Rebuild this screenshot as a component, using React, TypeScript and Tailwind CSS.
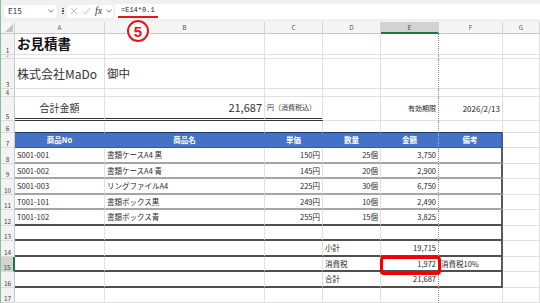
import React from "react";

type Spec = {
  t?: React.ReactNode;
  a?: "l" | "c" | "r";
  z?: string;
  c?: string;
  b?: string;
  r?: string;
};

const W = ["w-[90px]", "w-[160px]", "w-[58px]", "w-[58px]", "w-[58px]", "w-[64px]", "flex-1"];

const GRID_B = "border-b border-b-[#e1e1e1]";
const LIGHT_B = "border-b-2 border-b-[#a5a5a5]";
const DARK_B = "border-b-2 border-b-[#4f4f4f]";
const DOUBLE_B = "border-b-[3px] border-b-[#333] [border-bottom-style:double]";
const EDGE_R = "border-r-2 border-r-[#5a5a5a]";

function Row({
  h,
  n,
  cells = [],
  bottom,
  edge = false,
  sel = false,
  lz = "text-[6.5px] pb-[1px]",
}: {
  h: string;
  n: number;
  cells?: Spec[];
  bottom?: string;
  edge?: boolean;
  sel?: boolean;
  lz?: string;
}) {
  return (
    <div className={`flex ${h}`}>
      <div
        className={`w-[14px] shrink-0 overflow-hidden flex items-end justify-center ${lz} leading-none border-b border-b-[#dadada] ${
          sel
            ? "bg-[#d2d2d2] text-[#17663a] border-r-2 border-r-[#217346]"
            : "bg-[#f3f3f3] text-[#444] border-r border-r-[#c9c9c9]"
        }`}
      >
        {n}
      </div>
      {W.map((w, i) => {
        const s = cells[i] ?? {};
        const al = s.a === "r" ? "justify-end" : s.a === "c" ? "justify-center" : "justify-start";
        const b = s.b ?? (bottom && i < 6 ? bottom : GRID_B);
        const r =
          s.r ??
          (edge && i === 5
            ? EDGE_R
            : i === 4
            ? "border-r border-r-[#8e8e8e] [border-right-style:dotted]"
            : "border-r border-r-[#e1e1e1]");
        return (
          <div
            key={i}
            className={`relative ${w} shrink-0 flex items-center ${al} px-[2px] whitespace-nowrap leading-none ${
              s.z ?? "text-[7.5px]"
            } ${s.c ?? "text-[#262626]"} ${b} ${r}`}
          >
            {s.t}
          </div>
        );
      })}
    </div>
  );
}

const Chevron = () => (
  <svg width="6" height="4" viewBox="0 0 6 4" fill="none" stroke="#666" strokeWidth="0.9">
    <path d="M0.5 0.8 L3 3.2 L5.5 0.8" />
  </svg>
);

const HEAD = "bg-[#4472c4] text-white font-bold";
const head = (t: string, i: number): Spec => ({
  t,
  a: "c",
  c: HEAD,
  b: "border-b border-b-[#3a5a96]",
  r:
    i === 4
      ? "border-r border-r-[#a9bde3] [border-right-style:dotted]"
      : i === 5
      ? "border-r-2 border-r-[#3d5f9e]"
      : "border-r border-r-[#4472c4]",
});

const items = [
  ["S001-001", "書類ケースA4 黒", "150円", "25個", "3,750"],
  ["S001-002", "書類ケースA4 青", "145円", "20個", "2,900"],
  ["S001-003", "リングファイルA4", "225円", "30個", "6,750"],
  ["T001-101", "書類ボックス黒", "249円", "10個", "2,490"],
  ["T001-102", "書類ボックス青", "255円", "15個", "3,825"],
];
const itemH = ["h-[16px]", "h-[15px]", "h-[16px]", "h-[15px]", "h-[16px]"];

const App = (): JSX.Element => {
  return (
    <div className="relative w-[540px] h-[303px] overflow-hidden bg-white border-l border-l-[#83bf98] font-['Noto_Sans_CJK_JP','Noto_Sans',sans-serif]">
      {/* formula bar */}
      <div className="flex h-[22px] items-center bg-[#f0f0f0]">
        <div className="ml-[3px] w-[53px] h-[13px] bg-white rounded-[3px] flex items-center justify-between pl-[4px] pr-[3px] text-[8px] text-[#333]">
          <span>E15</span>
          <Chevron />
        </div>
        <div className="ml-[3px] w-[6px] flex flex-col items-center gap-[1px]">
          <div className="w-[1.5px] h-[1.5px] bg-[#555]" />
          <div className="w-[1.5px] h-[1.5px] bg-[#555]" />
          <div className="w-[1.5px] h-[1.5px] bg-[#555]" />
        </div>
        <div className="ml-[1px] w-[46px] h-[13px] bg-white rounded-[3px] flex items-center gap-[4px] pl-[3px]">
          <svg width="8" height="8" viewBox="0 0 8 8" stroke="#b8b8b8" strokeWidth="0.9">
            <path d="M1 1 L7 7 M7 1 L1 7" />
          </svg>
          <svg width="9" height="8" viewBox="0 0 9 8" fill="none" stroke="#b8b8b8" strokeWidth="0.9">
            <path d="M1 4.5 L3.5 7 L8 1" />
          </svg>
          <span className="font-['Liberation_Serif',serif] italic text-[10px] leading-none text-[#333]">fx</span>
          <Chevron />
        </div>
        <div className="ml-[2px] flex-1 h-[15px] bg-white flex items-center pl-[3px]">
          <span className="px-[3px] pt-[1px] pb-[1px] border-b-2 border-b-[#e8141b] font-['Liberation_Mono',monospace] text-[7px] leading-[9px] text-[#222]">
            =E14*0.1
          </span>
        </div>
      </div>

      {/* column headers */}
      <div className="flex h-[12px] bg-[#f5f5f5]">
        <div className="relative w-[14px] shrink-0 border-r border-r-[#d0d0d0] border-b border-b-[#c6c6c6]">
          <svg className="absolute right-[1px] bottom-[1px]" width="8" height="8" viewBox="0 0 8 8">
            <polygon points="8,0 8,8 0,8" fill="#c4c4c4" />
          </svg>
        </div>
        {["A", "B", "C", "D", "E", "F", "G"].map((l, i) => (
          <div
            key={l}
            className={`${W[i]} shrink-0 flex items-center justify-center text-[6.5px] leading-none border-r border-r-[#d6d6d6] ${
              i === 4
                ? "bg-[#d2d2d2] text-[#1e6b40] border-b-2 border-b-[#217346]"
                : "text-[#555] border-b border-b-[#c6c6c6]"
            }`}
          >
            {l}
          </div>
        ))}
      </div>

      <Row h="h-[21px]" n={1} cells={[{ t: "お見積書", z: "text-[13.5px]", c: "font-bold text-[#111]" }]} />
      <Row h="h-[4px]" n={2} lz="text-[3px] pb-0" />
      <Row
        h="h-[30px]"
        n={3}
        cells={[
          { t: "株式会社MaDo", z: "text-[12px]", c: "text-[#333]" },
          { t: "御中", z: "text-[11.5px]", c: "text-[#333]" },
        ]}
      />
      <Row h="h-[8px]" n={4} lz="text-[6px] pb-0" />
      <Row
        h="h-[24px]"
        n={5}
        cells={[
          { t: "合計金額", a: "c", z: "text-[10px]", c: "text-[#333]", b: DOUBLE_B },
          { t: "21,687", a: "r", z: "text-[11px]", c: "text-[#333]", b: DOUBLE_B },
          { t: "円（消費税込）", z: "text-[7px]", c: "text-[#333]", b: DOUBLE_B },
          {},
          { t: "有効期限", a: "r", z: "text-[7px]" },
          { t: "2026/2/13", a: "r", z: "text-[8px]" },
        ]}
      />
      <Row h="h-[12px]" n={6} bottom="border-b border-b-[#1f3864]" />
      <Row
        h="h-[15px]"
        n={7}
        cells={["商品No", "商品名", "単価", "数量", "金額", "備考"].map((t, i) => head(t, i))}
      />
      {items.map((it, k) => (
        <Row
          key={it[0]}
          h={itemH[k]}
          n={8 + k}
          edge
          bottom={k === 4 ? DARK_B : LIGHT_B}
          cells={[
            { t: it[0] },
            { t: it[1] },
            { t: it[2], a: "r" },
            { t: it[3], a: "r" },
            { t: it[4], a: "r" },
          ]}
        />
      ))}
      <Row h="h-[15px]" n={13} edge bottom={DARK_B} />
      <Row h="h-[16px]" n={14} edge bottom={DARK_B} cells={[{}, {}, {}, { t: "小計" }, { t: "19,715", a: "r" }]} />
      <Row
        h="h-[15px]"
        n={15}
        sel
        edge
        bottom={DARK_B}
        cells={[
          {},
          {},
          {},
          { t: "消費税" },
          {
            t: (
              <>
                1,972
                <div className="absolute left-[-1px] top-[-1px] w-[61px] h-[19px] z-10 border-[3px] border-[#f20000] rounded-[4px]" />
              </>
            ),
            a: "r",
          },
          { t: "消費税10%" },
        ]}
      />
      <Row h="h-[16px]" n={16} edge bottom={DARK_B} cells={[{}, {}, {}, { t: "合計" }, { t: "21,687", a: "r" }]} />
      <Row h="h-[15px]" n={17} />

      {/* callout number */}
      <div className="absolute left-[126px] top-[20px] z-20 w-[22px] h-[22px] rounded-full bg-white border-2 border-[#e8141b] ring-1 ring-white flex items-center justify-center text-[15px] font-bold leading-none text-[#e8141b] font-['Liberation_Sans',sans-serif]">
        5
      </div>
    </div>
  );
};

export default App;
